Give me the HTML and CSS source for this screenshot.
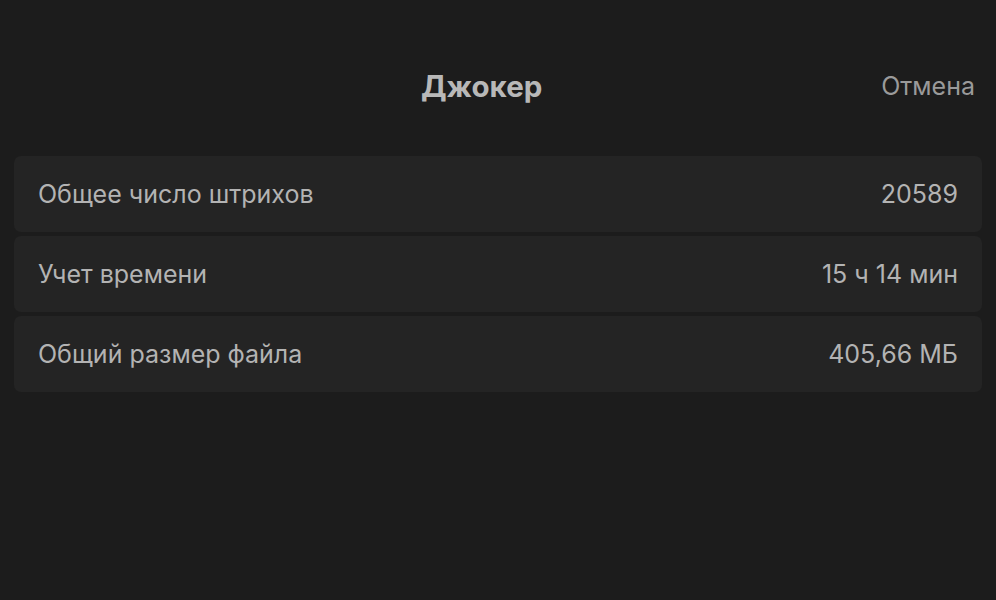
FILE: index.html
```html
<!DOCTYPE html>
<html lang="ru">
<head>
<meta charset="utf-8">
<link rel="stylesheet" href="styles.css">
</head>
<body>
<div class="header">
  <div class="title">Джокер</div>
  <div class="cancel">Отмена</div>
</div>
<div class="list">
  <div class="row"><span class="label">Общее число штрихов</span><span class="value">20589</span></div>
  <div class="row"><span class="label">Учет времени</span><span class="value">15 ч 14 мин</span></div>
  <div class="row"><span class="label">Общий размер файла</span><span class="value">405,66 МБ</span></div>
</div>
</body>
</html>
```
FILE: styles.css
```css
html, body {
  margin: 0;
  padding: 0;
  background: #1c1c1c;
  height: 100%;
}
body {
  font-family: Inter, "Noto Sans", sans-serif;
  color: #b3b3b3;
}
.header {
  height: 156px;
  display: flex;
  align-items: flex-start;
  justify-content: space-between;
  padding: 0 21px 0 421px;
  box-sizing: border-box;
}
.title {
  margin-top: 68px;
  font-size: 29.5px;
  font-weight: 700;
  color: #b8b8b8;
  line-height: 36px;
}
.cancel {
  margin-top: 70px;
  font-size: 25px;
  color: #9a9a9a;
  line-height: 32px;
}
.list {
  display: flex;
  flex-direction: column;
  gap: 4px;
  padding: 0 14px;
}
.row {
  height: 76px;
  background: #242424;
  border-radius: 7px;
  display: flex;
  align-items: center;
  justify-content: space-between;
  padding: 0 24px;
  font-size: 25px;
}
.label { color: #b3b3b3; }
.value { color: #b3b3b3; }
```
